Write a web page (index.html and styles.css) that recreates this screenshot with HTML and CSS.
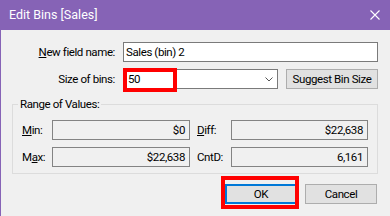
FILE: index.html
```html
<!DOCTYPE html>
<html>
<head>
<meta charset="utf-8">
<link rel="stylesheet" href="styles.css">
</head>
<body>
<div class="window">
  <div class="titlebar">
    <span class="title">Edit Bins [Sales]</span>
    <svg class="close" width="10" height="10" viewBox="0 0 10 10"><path d="M0.5 0.5 L9.5 9.5 M9.5 0.5 L0.5 9.5" stroke="#fff" stroke-width="1.1" fill="none"/></svg>
  </div>
  <div class="content">
    <div class="row row-name">
      <span class="label"><u>N</u>ew field name:</span>
      <div class="input name-input">Sales (bin) 2</div>
    </div>
    <div class="row row-size">
      <span class="label">Size of bins:</span>
      <div class="combo">
        <span class="combo-value">50</span>
        <svg class="chevron" width="8" height="5" viewBox="0 0 8 5"><path d="M0.5 0.5 L4 4 L7.5 0.5" stroke="#555" stroke-width="1" fill="none"/></svg>
        <div class="highlight highlight-size"></div>
      </div>
      <button class="btn suggest">Suggest Bin Size</button>
    </div>
    <fieldset class="group">
      <legend class="legend">Range of Values:</legend>
      <div class="stats">
        <span class="stat-label"><u>M</u>in:</span>
        <div class="stat-field">$0</div>
        <span class="stat-label stat-label-right"><u>D</u>iff:</span>
        <div class="stat-field">$22,638</div>
        <span class="stat-label">M<u>a</u>x:</span>
        <div class="stat-field">$22,638</div>
        <span class="stat-label stat-label-right">CntD:</span>
        <div class="stat-field">6,161</div>
      </div>
    </fieldset>
    <div class="actions">
      <button class="btn ok">OK<span class="highlight highlight-ok"></span></button>
      <button class="btn cancel">Cancel</button>
    </div>
  </div>
</div>
</body>
</html>
```

FILE: styles.css
```css
* { box-sizing: border-box; }
html, body { margin: 0; padding: 0; }
body {
  font-family: Roboto, "Noto Sans", sans-serif;
  font-size: 11.5px;
  letter-spacing: -0.4px;
  color: #000;
  background: #f0f0f0;
}
.window {
  width: 390px;
  height: 216px;
  background: #f0f0f0;
  box-shadow: inset 1px 0 0 #8663b6;
  overflow: hidden;
}
.titlebar {
  height: 30px;
  background: #8663b6;
  display: flex;
  align-items: center;
  justify-content: space-between;
  padding: 0 10px 0 9px;
}
.title {
  color: #fff;
  font-size: 12.5px;
  letter-spacing: 0;
  line-height: 16px;
}
.close { display: block; }
.content {
  padding-top: 12px;
}
.row {
  display: flex;
  align-items: center;
  height: 20px;
}
.row-size { margin-top: 7px; }
.label {
  width: 115px;
  text-align: right;
  margin-right: 8px;
  line-height: 16px;
  white-space: nowrap;
}
.input {
  height: 20px;
  background: #fff;
  border: 1px solid #7a7a7a;
  padding: 0 2px;
  line-height: 18px;
}
.name-input { width: 255px; }
.combo {
  position: relative;
  width: 155px;
  height: 20px;
  background: #fff;
  border: 1px solid #7a7a7a;
  display: flex;
  align-items: center;
  justify-content: space-between;
  padding: 0 4px 0 4px;
  margin-right: 8px;
}
.combo-value { line-height: 18px; }
.chevron { display: block; }
.highlight {
  position: absolute;
  border: 4px solid #f00;
  pointer-events: none;
}
.highlight-size {
  left: -1px;
  top: -2px;
  width: 54px;
  height: 24px;
}
.btn {
  font-family: inherit;
  font-size: inherit;
  letter-spacing: inherit;
  color: #000;
  background: #e1e1e1;
  border: 1px solid #adadad;
  height: 20px;
  padding: 0;
  margin: 0;
  line-height: 18px;
  white-space: nowrap;
}
.suggest { width: 92px; }
.group {
  margin: 8px 0 0 12px;
  width: 366px;
  border: 1px solid #dcdcdc;
  padding: 0 0 6px 9px;
}
.legend {
  padding: 0 2px;
  margin-left: -4px;
  line-height: 15px;
}
.stats {
  display: grid;
  grid-template-columns: 30px 138px 41px 137px;
  grid-auto-rows: 20px;
  row-gap: 7px;
  align-items: center;
  margin-top: 8px;
}
.stat-label { line-height: 16px; }
.stat-label-right { padding-left: 7px; }
.stat-field {
  height: 20px;
  border: 1px solid #838383;
  background: #f0f0f0;
  text-align: right;
  padding-right: 4px;
  line-height: 18px;
}
.actions {
  display: flex;
  justify-content: flex-end;
  gap: 8px;
  padding-right: 13px;
  margin-top: 10px;
}
.ok, .cancel { width: 72px; }
.ok {
  position: relative;
  border: 2px solid #0078d7;
  line-height: 16px;
}
.highlight-ok {
  left: -6px;
  top: -10px;
  width: 78px;
  height: 33px;
}
```
